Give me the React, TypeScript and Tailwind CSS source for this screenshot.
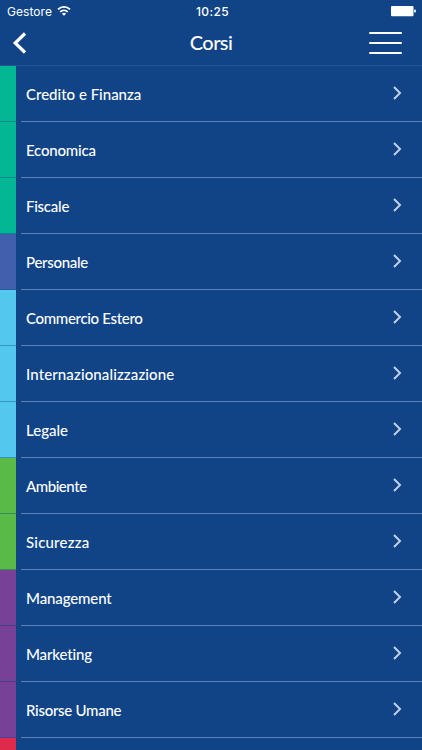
import React from 'react';

const courses = [
  { name: "Credito e Finanza", bar: "bg-[#03b795]", tracking: "tracking-normal" },
  { name: "Economica", bar: "bg-[#03b795]", tracking: "tracking-[-0.2px]" },
  { name: "Fiscale", bar: "bg-[#03b795]", tracking: "tracking-[-0.25px]" },
  { name: "Personale", bar: "bg-[#425fad]", tracking: "tracking-[-0.3px]" },
  { name: "Commercio Estero", bar: "bg-[#54c7ee]", tracking: "tracking-[-0.32px]" },
  { name: "Internazionalizzazione", bar: "bg-[#54c7ee]", tracking: "tracking-[0.12px]" },
  { name: "Legale", bar: "bg-[#54c7ee]", tracking: "tracking-normal" },
  { name: "Ambiente", bar: "bg-[#59ba47]", tracking: "tracking-[-0.45px]" },
  { name: "Sicurezza", bar: "bg-[#59ba47]", tracking: "tracking-[0.2px]" },
  { name: "Management", bar: "bg-[#774197]", tracking: "tracking-[-0.12px]" },
  { name: "Marketing", bar: "bg-[#774197]", tracking: "tracking-[-0.15px]" },
  { name: "Risorse Umane", bar: "bg-[#774197]", tracking: "tracking-[-0.28px]" },
];

const App = () => {
  return (
    <div className="w-full h-[750px] bg-[#104487] text-white overflow-hidden flex flex-col font-['Lato',sans-serif]">
      {/* Status bar */}
      <div className="h-[22px] shrink-0 grid grid-cols-[1fr_auto_1fr] items-center px-[6px] font-['Inter',sans-serif] text-[12px] leading-none">
        <div className="flex items-center gap-[5px]">
          <span className="pl-px pt-px tracking-[0.05px]">Gestore</span>
          <svg width="14" height="11" viewBox="0 0 14 11" fill="none" stroke="white" strokeWidth="1.8">
            <path d="M1 3.4a8.6 8.6 0 0 1 12 0" />
            <path d="M3.2 5.8a5.5 5.5 0 0 1 7.6 0" />
            <path d="M7 9.8 4.9 7.7a3 3 0 0 1 4.2 0z" fill="white" stroke="none" />
          </svg>
        </div>
        <span className="pl-[3px] pt-px font-medium tracking-[0.4px]">10:25</span>
        <svg className="justify-self-end" width="25" height="11" viewBox="0 0 25 11" fill="white">
          <rect x="0" y="0" width="22.5" height="10.3" rx="1" />
          <rect x="23.2" y="3.6" width="1.6" height="3" rx="0.7" />
        </svg>
      </div>

      {/* Nav bar */}
      <header className="h-[44px] shrink-0 grid grid-cols-[1fr_auto_1fr] items-center pl-[12px] pr-[20px] border-b border-[#265391]">
        <button className="justify-self-start pb-px" aria-label="Indietro">
          <svg width="15" height="22" viewBox="0 0 15 22" fill="none" stroke="white" strokeWidth="3.2">
            <path d="M13 1.5 3.2 11l9.8 9.5" />
          </svg>
        </button>
        <h1 className="pl-[8px] pb-[3px] text-center text-[20px] leading-none font-medium tracking-[-0.6px]">Corsi</h1>
        <button className="justify-self-end pb-px" aria-label="Menu">
          <svg width="34" height="24" viewBox="0 0 34 24" stroke="white" strokeWidth="2" strokeLinecap="round">
            <path d="M2 2h31M2 12h31M2 22h31" />
          </svg>
        </button>
      </header>

      {/* Course list */}
      <ul>
        {courses.map((course) => (
          <li key={course.name} className="h-[56px] flex">
            <div className={`w-[16px] shrink-0 border-b border-[#104487]/40 ${course.bar}`} />
            <div className="ml-[5px] pl-[5px] pr-[20px] flex-1 flex items-center justify-between border-b border-[#607fb3]">
              <span className={`pt-[2px] text-[15px] leading-none font-medium whitespace-nowrap ${course.tracking}`}>{course.name}</span>
              <svg className="mb-px" width="10" height="14" viewBox="0 0 10 14" fill="none" stroke="#c3d0e1" strokeWidth="2">
                <path d="m2 1 6 6-6 6" />
              </svg>
            </div>
          </li>
        ))}
        <li className="h-[56px] flex">
          <div className="w-[16px] bg-[#de2a4c]" />
        </li>
      </ul>
    </div>
  );
};

export default App;
